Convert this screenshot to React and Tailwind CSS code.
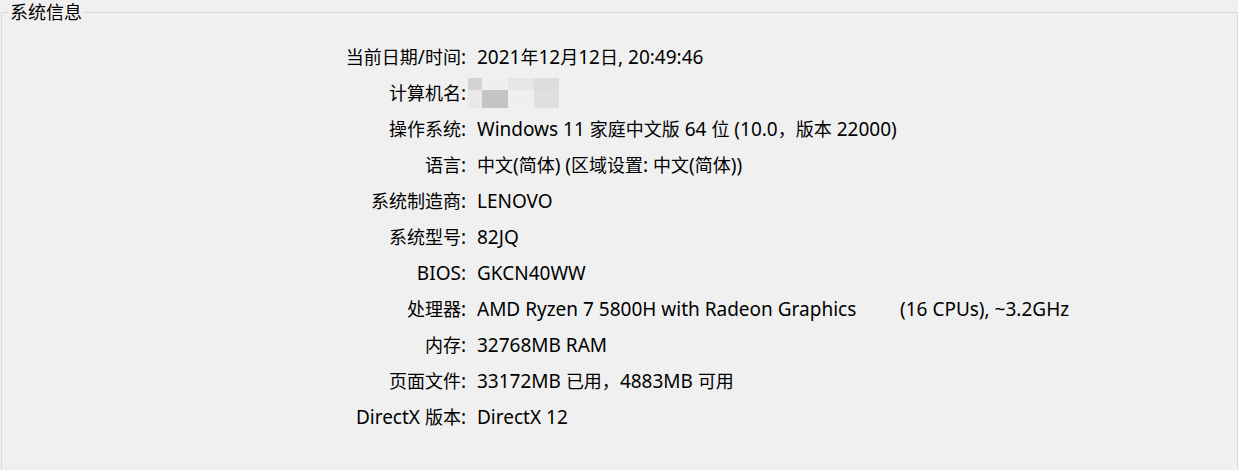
import React from "react";

const rows = [
  ["当前日期/时间:", "2021年12月12日, 20:49:46"],
  ["计算机名:", "__mosaic__"],
  ["操作系统:", "Windows 11 家庭中文版 64 位 (10.0，版本 22000)"],
  ["语言:", "中文(简体) (区域设置: 中文(简体))"],
  ["系统制造商:", "LENOVO"],
  ["系统型号:", "82JQ"],
  ["BIOS:", "GKCN40WW"],
  ["处理器:", "__cpu__"],
  ["内存:", "32768MB RAM"],
  ["页面文件:", "33172MB 已用，4883MB 可用"],
  ["DirectX 版本:", "DirectX 12"],
];

function T({ s }) {
  const parts = s.split(/([\u3000-\u9fff\uff00-\uffef]+)/).filter((p) => p !== "");
  return (
    <>
      {parts.map((p, i) =>
        /[\u3000-\u9fff\uff00-\uffef]/.test(p) ? (
          <span key={i} className="text-[18px]">{p}</span>
        ) : (
          <span key={i} className="text-[19px]">{p}</span>
        )
      )}
    </>
  );
}

function Mosaic() {
  return (
    <div className="flex flex-col -ml-[9px]">
      <div className="flex h-[12px]">
        <div className="w-[14px] bg-[#d3d3d3]" />
        <div className="w-[26px] bg-[#efefef]" />
        <div className="w-[26px] bg-[#e6e6e4]" />
        <div className="w-[25px] bg-[#dcdcdc]" />
      </div>
      <div className="flex h-[18px]">
        <div className="w-[14px] bg-[#e8e8e8]" />
        <div className="w-[26px] bg-[#c4c4c4]" />
        <div className="w-[26px] bg-[#efefef]" />
        <div className="w-[25px] bg-[#dfdfdf]" />
      </div>
    </div>
  );
}

export default function App() {
  return (
    <div
      className="h-[470px] w-[1238px] overflow-hidden bg-[#f0f0f0] text-black"
      style={{ fontFamily: '"Noto Sans", "Noto Sans CJK SC", sans-serif' }}
    >
      <fieldset className="ml-[1px] w-[1237px] h-[520px] border border-[#d9d9d9]">
        <legend className="ml-[6px] px-[2px] text-[18px] leading-[24px]">系统信息</legend>
        <div className="pt-[15px] flex flex-col">
          {rows.map(([label, value]) => (
            <div key={label} className="flex items-center h-[36px] text-[18px] leading-[36px]">
              <div className="w-[464px] text-right whitespace-nowrap">
                <T s={label} />
              </div>
              <div className="ml-[11px] whitespace-nowrap">
                {value === "__mosaic__" ? (
                  <Mosaic />
                ) : value === "__cpu__" ? (
                  <span className="flex">
                    <span className="inline-block w-[423px]">
                      <T s="AMD Ryzen 7 5800H with Radeon Graphics" />
                    </span>
                    <span>
                      <T s="(16 CPUs), ~3.2GHz" />
                    </span>
                  </span>
                ) : (
                  <T s={value} />
                )}
              </div>
            </div>
          ))}
        </div>
      </fieldset>
    </div>
  );
}
